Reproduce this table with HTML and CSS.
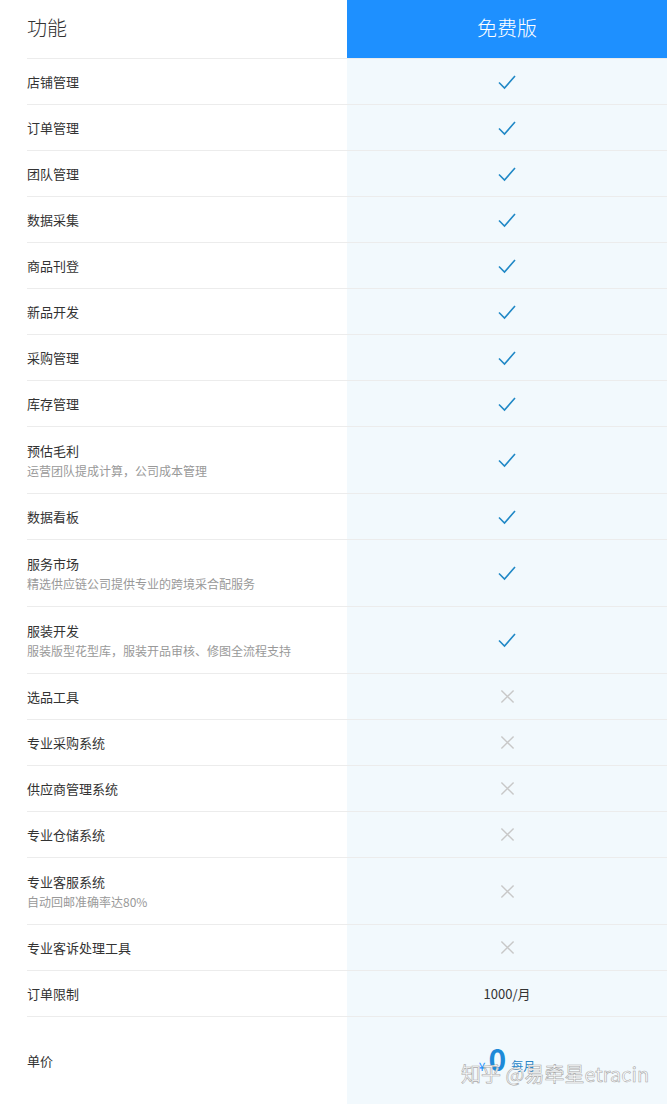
FILE: index.html
```html
<!DOCTYPE html>
<html lang="zh">
<head>
<meta charset="utf-8">
<link rel="stylesheet" href="styles.css">
</head>
<body>
<div class="table">
  <div class="row head">
    <div class="cell name"><span class="head-title">功能</span></div>
    <div class="cell val plan">免费版</div>
  </div>
  <div class="row"><div class="cell name">店铺管理</div><div class="cell val"><svg class="ok" viewBox="0 0 20 16"><path d="M2 8.5 L7.5 14 L18 2"/></svg></div></div>
  <div class="row"><div class="cell name">订单管理</div><div class="cell val"><svg class="ok" viewBox="0 0 20 16"><path d="M2 8.5 L7.5 14 L18 2"/></svg></div></div>
  <div class="row"><div class="cell name">团队管理</div><div class="cell val"><svg class="ok" viewBox="0 0 20 16"><path d="M2 8.5 L7.5 14 L18 2"/></svg></div></div>
  <div class="row"><div class="cell name">数据采集</div><div class="cell val"><svg class="ok" viewBox="0 0 20 16"><path d="M2 8.5 L7.5 14 L18 2"/></svg></div></div>
  <div class="row"><div class="cell name">商品刊登</div><div class="cell val"><svg class="ok" viewBox="0 0 20 16"><path d="M2 8.5 L7.5 14 L18 2"/></svg></div></div>
  <div class="row"><div class="cell name">新品开发</div><div class="cell val"><svg class="ok" viewBox="0 0 20 16"><path d="M2 8.5 L7.5 14 L18 2"/></svg></div></div>
  <div class="row"><div class="cell name">采购管理</div><div class="cell val"><svg class="ok" viewBox="0 0 20 16"><path d="M2 8.5 L7.5 14 L18 2"/></svg></div></div>
  <div class="row"><div class="cell name">库存管理</div><div class="cell val"><svg class="ok" viewBox="0 0 20 16"><path d="M2 8.5 L7.5 14 L18 2"/></svg></div></div>
  <div class="row tall"><div class="cell name"><div>预估毛利</div><div class="sub">运营团队提成计算，公司成本管理</div></div><div class="cell val"><svg class="ok" viewBox="0 0 20 16"><path d="M2 8.5 L7.5 14 L18 2"/></svg></div></div>
  <div class="row"><div class="cell name">数据看板</div><div class="cell val"><svg class="ok" viewBox="0 0 20 16"><path d="M2 8.5 L7.5 14 L18 2"/></svg></div></div>
  <div class="row tall"><div class="cell name"><div>服务市场</div><div class="sub">精选供应链公司提供专业的跨境采合配服务</div></div><div class="cell val"><svg class="ok" viewBox="0 0 20 16"><path d="M2 8.5 L7.5 14 L18 2"/></svg></div></div>
  <div class="row tall"><div class="cell name"><div>服装开发</div><div class="sub">服装版型花型库，服装开品审核、修图全流程支持</div></div><div class="cell val"><svg class="ok" viewBox="0 0 20 16"><path d="M2 8.5 L7.5 14 L18 2"/></svg></div></div>
  <div class="row"><div class="cell name">选品工具</div><div class="cell val"><svg class="no" viewBox="0 0 16 16"><path d="M1.5 1.5 L14.5 14.5 M14.5 1.5 L1.5 14.5"/></svg></div></div>
  <div class="row"><div class="cell name">专业采购系统</div><div class="cell val"><svg class="no" viewBox="0 0 16 16"><path d="M1.5 1.5 L14.5 14.5 M14.5 1.5 L1.5 14.5"/></svg></div></div>
  <div class="row"><div class="cell name">供应商管理系统</div><div class="cell val"><svg class="no" viewBox="0 0 16 16"><path d="M1.5 1.5 L14.5 14.5 M14.5 1.5 L1.5 14.5"/></svg></div></div>
  <div class="row"><div class="cell name">专业仓储系统</div><div class="cell val"><svg class="no" viewBox="0 0 16 16"><path d="M1.5 1.5 L14.5 14.5 M14.5 1.5 L1.5 14.5"/></svg></div></div>
  <div class="row tall"><div class="cell name"><div>专业客服系统</div><div class="sub">自动回邮准确率达80%</div></div><div class="cell val"><svg class="no" viewBox="0 0 16 16"><path d="M1.5 1.5 L14.5 14.5 M14.5 1.5 L1.5 14.5"/></svg></div></div>
  <div class="row"><div class="cell name">专业客诉处理工具</div><div class="cell val"><svg class="no" viewBox="0 0 16 16"><path d="M1.5 1.5 L14.5 14.5 M14.5 1.5 L1.5 14.5"/></svg></div></div>
  <div class="row"><div class="cell name">订单限制</div><div class="cell val text">1000/月</div></div>
  <div class="row price"><div class="cell name">单价</div><div class="cell val"><span class="yen">¥</span><span class="zero">0</span><span class="unit">每月</span></div></div>
</div>
<div class="watermark">知乎 @易牵星etracin</div>
</body>
</html>
```
FILE: styles.css
```css
html, body {
  margin: 0;
  padding: 0;
  background: #fff;
}
body {
  width: 667px;
  height: 1104px;
  overflow: hidden;
  position: relative;
  font-family: "Noto Sans CJK SC", "Noto Sans", sans-serif;
  color: #333;
}
.table {
  display: flex;
  flex-direction: column;
  background: linear-gradient(to right, #fff 347px, #f2f9fd 347px);
}
.row {
  margin-left: 27px;
  display: grid;
  grid-template-columns: 320px 320px;
  height: 46px;
  border-bottom: 1px solid #ececec;
  box-sizing: border-box;
}
.row.tall { height: 67px; }
.row.head { height: 59px; }
.row.price { height: 88px; border-bottom: none; }
.cell {
  display: flex;
  align-items: center;
}
.name {
  font-size: 13px;
  line-height: 18px;
}
.name > div + .sub { margin-top: 3px; }
.name:has(.sub) {
  flex-direction: column;
  align-items: flex-start;
  justify-content: center;
}
.sub {
  font-size: 12px;
  color: #999;
  line-height: 16px;
}
.val {
  justify-content: center;
}
.head-title {
  font-size: 20px;
  font-weight: 300;
  color: #333;
  margin-top: -3px;
}
.plan {
  background: #1e90ff;
  color: #fff;
  font-size: 20px;
  font-weight: 300;
  height: 58px;
  padding-bottom: 4px;
  box-sizing: border-box;
}
.ok {
  width: 20px;
  height: 16px;
  fill: none;
  stroke: #2088c6;
  stroke-width: 1.6;
}
.no {
  width: 15px;
  height: 15px;
  fill: none;
  stroke: #c8c8c8;
  stroke-width: 1.5;
}
.text {
  font-size: 13px;
  color: #333;
}
.price .val {
  align-items: baseline;
  padding-top: 26px;
  box-sizing: border-box;
}
.yen {
  font-size: 12px;
  color: #1e90ff;
  margin-right: 3px;
}
.zero {
  font-size: 30px;
  font-weight: 700;
  color: #1e8ad8;
  line-height: 30px;
}
.unit {
  font-size: 12px;
  color: #2a86c8;
  margin-left: 5px;
}
.watermark {
  position: absolute;
  left: 461px;
  top: 1061px;
  font-size: 20px;
  line-height: 26px;
  color: #fff;
  -webkit-text-stroke: 0.6px #aaa;
  white-space: nowrap;
}
```
